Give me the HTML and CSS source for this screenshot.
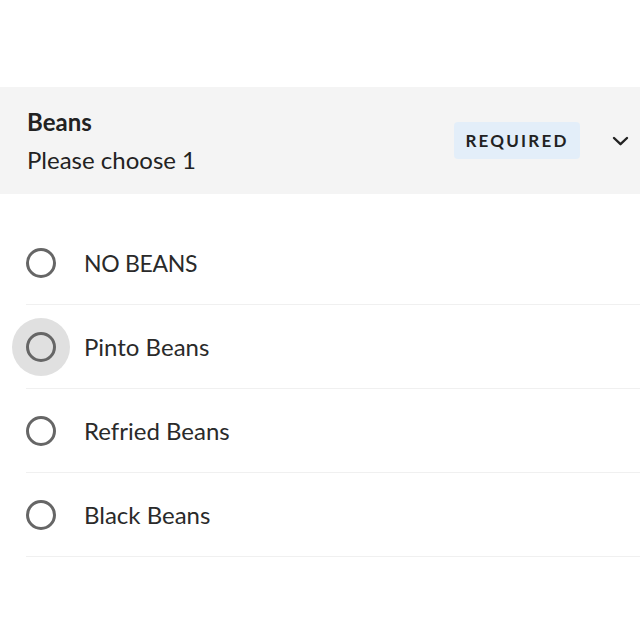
FILE: index.html
```html
<!DOCTYPE html>
<html lang="en">
<head>
    <meta charset="UTF-8">
    <meta name="viewport" content="width=device-width, initial-scale=1.0">
    <title>Beans</title>
    <link rel="stylesheet" href="styles.css">
</head>
<body>
    <div class="option-group">
        <div class="group-header">
            <div class="group-info">
                <div class="group-title">Beans</div>
                <div class="group-sub">Please choose 1</div>
            </div>
            <span class="badge">REQUIRED</span>
            <svg class="chevron" width="17" height="10" viewBox="0 0 17 10">
                <path d="M2 2l6.5 6.2L15 2" fill="none" stroke="#222" stroke-width="2.4" stroke-linecap="round" stroke-linejoin="round"/>
            </svg>
        </div>
        <ul class="options">
            <li class="option">
                <span class="radio"></span>
                <span class="label caps">NO BEANS</span>
            </li>
            <li class="option focused">
                <span class="radio"></span>
                <span class="label">Pinto Beans</span>
            </li>
            <li class="option">
                <span class="radio"></span>
                <span class="label">Refried Beans</span>
            </li>
            <li class="option">
                <span class="radio"></span>
                <span class="label">Black Beans</span>
            </li>
        </ul>
    </div>
</body>
</html>
```

FILE: styles.css
```css
body {
    font-family: Lato, "Liberation Sans", sans-serif;
    background: #fff;
    color: #222;
    margin: 0;
    padding: 0;
}
.option-group {
    padding-top: 87px;
}
.group-header {
    display: flex;
    align-items: center;
    height: 107px;
    padding: 0 11px 0 27px;
    background: #f4f4f4;
}
.group-info {
    flex: 1;
}
.group-title {
    font-size: 24px;
    font-weight: 700;
    line-height: 30px;
    margin-bottom: 8px;
}
.group-sub {
    font-size: 24px;
    line-height: 30px;
}
.badge {
    display: inline-block;
    width: 126px;
    height: 37px;
    line-height: 37px;
    text-align: center;
    background: #e3eef9;
    border-radius: 4px;
    font-size: 17px;
    font-weight: 700;
    letter-spacing: 2.2px;
    color: #222;
}
.chevron {
    margin-left: 32px;
}
.options {
    list-style: none;
    margin: 0;
    padding: 27px 0 0 26px;
}
.option {
    display: flex;
    align-items: center;
    height: 83px;
    border-bottom: 1px solid #f0f0f0;
}
.radio {
    position: relative;
    box-sizing: border-box;
    width: 30px;
    height: 30px;
    border: 3px solid #666;
    border-radius: 50%;
    margin-right: 28px;
}
.focused .radio::before {
    content: "";
    position: absolute;
    left: -17px;
    top: -17px;
    width: 58px;
    height: 58px;
    border-radius: 50%;
    background: #e0e0e0;
    z-index: -1;
}
.label {
    font-size: 24px;
    color: #2a2a2a;
}
.label.caps {
    font-size: 23px;
    letter-spacing: -0.3px;
}
```
